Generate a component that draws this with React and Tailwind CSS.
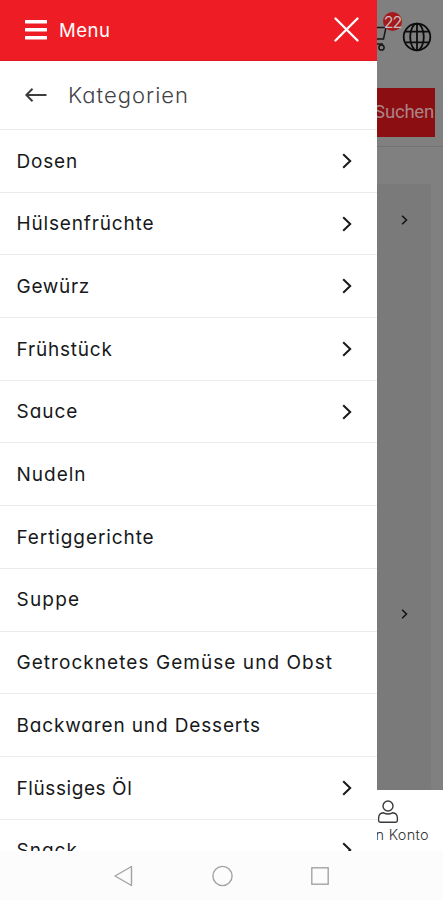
import { clsx } from 'clsx';

const categories = [
  { name: 'Dosen', nested: true, tracking: 'tracking-[0.8px]' },
  { name: 'Hülsenfrüchte', nested: true, tracking: 'tracking-[0.84px]' },
  { name: 'Gewürz', nested: true, tracking: 'tracking-[0.7px]' },
  { name: 'Frühstück', nested: true, tracking: 'tracking-[0.8px]' },
  { name: 'Sauce', nested: true, tracking: 'tracking-[0.95px]' },
  { name: 'Nudeln', tracking: 'tracking-[1px]' },
  { name: 'Fertiggerichte', tracking: 'tracking-[0.9px]' },
  { name: 'Suppe', tracking: 'tracking-[1.2px]' },
  { name: 'Getrocknetes Gemüse und Obst', tracking: 'tracking-[1.05px]' },
  { name: 'Backwaren und Desserts', tracking: 'tracking-[0.86px]' },
  { name: 'Flüssiges Öl', nested: true, tracking: 'tracking-[0.58px]' },
  { name: 'Snack', nested: true, tracking: 'tracking-[1px]' },
];

const Chevron = ({ className }) => (
  <svg viewBox="0 0 10 16" className={className} fill="none" stroke="currentColor">
    <path d="M1.2 1.2 8.2 8l-7 6.8" />
  </svg>
);

const DrawerHeader = () => (
  <div className="flex h-[61px] shrink-0 items-center justify-between border-b border-[#dd1820] bg-[#ee1d25] pl-[25px] pr-[18px] text-white">
    <div className="flex items-center gap-3">
      <svg width="22" height="20" viewBox="0 0 22 20" fill="currentColor">
        <rect width="22" height="3.6" rx="0.5" />
        <rect y="8" width="22" height="3.6" rx="0.5" />
        <rect y="16" width="22" height="3.6" rx="0.5" />
      </svg>
      <span className="pt-px text-[18.5px] leading-none tracking-[0.5px]">Menu</span>
    </div>
    <svg width="25" height="25" viewBox="0 0 25 25" fill="none" stroke="currentColor" strokeWidth="2.3" strokeLinecap="round" className="-mt-0.5">
      <path d="M1.5 1.5l22 22M23.5 1.5l-22 22" />
    </svg>
  </div>
);

const Drawer = () => (
  <aside className="flex w-[377px] shrink-0 flex-col overflow-hidden bg-white">
    <DrawerHeader />

    {/* Back row */}
    <div className="flex h-[69px] shrink-0 items-center gap-[21px] border-b border-[#ebebeb] pl-[25px]">
      <svg width="22" height="14" viewBox="0 0 22 14" fill="none" stroke="#3d3d3d" strokeWidth="2">
        <path d="M21.5 7H1.5M7.5 0.8 1.3 7l6.2 6.2" />
      </svg>
      <span className="text-[22px] font-light leading-none tracking-[1px] text-[#3f4246]">Kategorien</span>
    </div>

    {/* Categories */}
    <ul>
      {categories.map(({ name, nested, tracking }) => (
        <li key={name} className="flex h-[62.7px] items-center justify-between border-b border-[#ebebeb] pl-[16.5px] pr-[25px] text-[#17191b]">
          <span className={clsx('whitespace-nowrap pt-[0.6px] text-[19px] leading-none', tracking)}>{name}</span>
          {nested && <Chevron className="h-4 w-2.5 stroke-2" />}
        </li>
      ))}
    </ul>
  </aside>
);

const CartIcon = () => (
  <svg width="32" height="30" viewBox="0 0 32 30" fill="none" stroke="#161616" strokeWidth="1.5" className="shrink-0">
    <path d="M1 2h5l4.5 20h16.5M7 5.500h23l-2.500 11.500H9.500" />
    <circle cx="12" cy="25.5" r="2.6" />
    <circle cx="25.5" cy="25.5" r="2.6" />
  </svg>
);

const GlobeIcon = () => (
  <svg width="30" height="30" viewBox="0 0 30 30" fill="none" stroke="#0c0c0c" strokeWidth="1.8" className="shrink-0">
    <circle cx="15" cy="15" r="13.3" />
    <ellipse cx="15" cy="15" rx="6.8" ry="13.3" />
    <path d="M15 1.7v26.6M3.2 9.7h23.6M3.2 20.3h23.6" />
  </svg>
);

// Part of the shop that stays visible beside the open drawer
const ShopPage = () => (
  <main className="flex min-w-0 flex-1 flex-col overflow-hidden bg-[#808080]">
    <div className="flex h-[147px] shrink-0 flex-col border-b border-[#727272]">
      <div className="flex h-[88px] justify-end pr-[11px] pt-[22px]">
        <div className="relative mr-[14px] shrink-0">
          <CartIcon />
          <span className="absolute -top-[10px] -right-[14px] flex h-[19px] w-[19px] items-center justify-center rounded-full bg-[#a51a1c] text-[16px] leading-none tracking-[-1px] text-[#c9bcbc]">
            22
          </span>
        </div>
        <GlobeIcon />
      </div>
      <div className="mr-2 flex h-[49px] items-center justify-end overflow-hidden bg-[#8b0e13]">
        <span className="pr-px font-[Roboto,sans-serif] text-[18.5px] leading-none tracking-[-0.2px] text-[#aa8585]">Suchen</span>
      </div>
    </div>

    <div className="mr-3 mt-[37px] flex flex-1 flex-col items-center bg-[#7a7a7a] pt-[31px] text-[#111]">
      <Chevron className="h-[10px] w-[7px] stroke-[2.4px]" />
      <Chevron className="mt-[384px] h-[10px] w-[7px] stroke-[2.4px]" />
    </div>

    <div className="flex h-[61px] shrink-0 flex-col bg-white pt-[10px]">
      <svg width="22" height="24" viewBox="0 0 22 24" fill="none" stroke="#3a3a3a" strokeWidth="1.4" className="shrink-0">
        <circle cx="11" cy="6" r="5" />
        <path d="M6.5 12.800c-3 .2-4.900 2.500-4.900 5.500v2.200c0 1 .7 1.700 1.700 1.700h15.400c1 0 1.700-.7 1.700-1.700v-2.200c0-3-1.900-5.300-4.900-5.500-2.800 1.500-6.200 1.500-9 0Z" />
      </svg>
      <div className="mt-[3px] flex justify-end overflow-hidden pr-[14px]">
        <span className="whitespace-nowrap text-[14.5px] font-light leading-[16px] tracking-[0.3px] text-[#333]">Mein Konto</span>
      </div>
    </div>
  </main>
);

const SystemBar = () => (
  <nav className="flex h-[49px] shrink-0 items-center gap-[78.5px] bg-[#fcfcfc] pl-[113px]">
    <svg width="20" height="22" viewBox="0 0 20 22" fill="none" stroke="#a3a3a3" strokeWidth="1.4" strokeLinejoin="round">
      <path d="M18.5 1.5v19L2 11Z" />
    </svg>
    <svg width="21" height="22" viewBox="0 0 21 22" fill="none" stroke="#a3a3a3" strokeWidth="1.4">
      <circle cx="10.5" cy="11" r="9.6" />
    </svg>
    <svg width="18" height="18" viewBox="0 0 18 18" fill="none" stroke="#a3a3a3" strokeWidth="1.4">
      <rect x="0.8" y="0.8" width="16.4" height="16.4" />
    </svg>
  </nav>
);

const App = () => (
  <div className="flex h-[900px] w-[443px] flex-col overflow-hidden bg-white font-[Inter,sans-serif] [font-feature-settings:'cv11']">
    <div className="flex h-[851px] shrink-0">
      <Drawer />
      <ShopPage />
    </div>
    <SystemBar />
  </div>
);

export default App;
